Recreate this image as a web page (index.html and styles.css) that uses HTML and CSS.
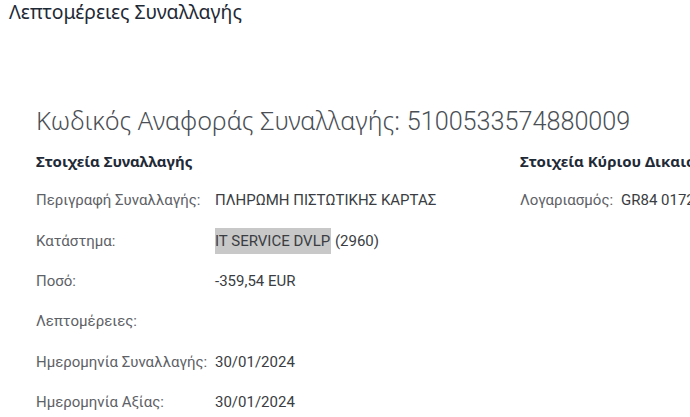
FILE: index.html
```html
<!DOCTYPE html>
<html lang="el">
<head>
  <meta charset="UTF-8">
  <title>Λεπτομέρειες Συναλλαγής</title>
  <link rel="stylesheet" href="styles.css">
</head>
<body>

  <h1 class="page-title">Λεπτομέρειες Συναλλαγής</h1>

  <div class="details">
    <h2 class="ref-title">Κωδικός Αναφοράς Συναλλαγής: <span class="ref-num">5100533574880009</span></h2>

    <div class="columns">
      <div class="col col-left">
        <h3 class="section-title">Στοιχεία Συναλλαγής</h3>
        <div class="row"><span class="label">Περιγραφή Συναλλαγής:</span><span class="value">ΠΛΗΡΩΜΗ ΠΙΣΤΩΤΙΚΗΣ ΚΑΡΤΑΣ</span></div>
        <div class="row"><span class="label">Κατάστημα:</span><span class="value"><mark>IT SERVICE DVLP</mark> (2960)</span></div>
        <div class="row"><span class="label">Ποσό:</span><span class="value">-359,54 EUR</span></div>
        <div class="row"><span class="label">Λεπτομέρειες:</span><span class="value"></span></div>
        <div class="row"><span class="label">Ημερομηνία Συναλλαγής:</span><span class="value">30/01/2024</span></div>
        <div class="row"><span class="label">Ημερομηνία Αξίας:</span><span class="value">30/01/2024</span></div>
      </div>

      <div class="col col-right">
        <h3 class="section-title">Στοιχεία Κύριου Δικαιούχου</h3>
        <div class="row row-account"><span class="label">Λογαριασμός:</span><span class="value">GR84 0172 0000 0050 0000 0000</span></div>
      </div>
    </div>
  </div>

</body>
</html>
```

FILE: styles.css
```css
html, body {
  margin: 0;
  overflow: hidden;
  background: #ffffff;
}

body {
  width: 690px;
  height: 417px;
  font-family: 'Roboto', 'Liberation Sans', sans-serif;
}

.page-title {
  margin: 0;
  padding: 0 0 0 9px;
  font-family: 'Noto Sans', sans-serif;
  font-size: 19.4px;
  font-weight: 400;
  line-height: 24px;
  color: #1f2a37;
}

.details {
  padding: 80px 0 0 36px;
  white-space: nowrap;
}

.ref-title {
  margin: 0;
  font-family: 'Noto Sans', sans-serif;
  font-size: 25.2px;
  font-weight: 300;
  line-height: 32px;
  color: #4a4f55;
}

.ref-num {
  font-family: 'Roboto', sans-serif;
  font-weight: 300;
}

.columns {
  display: flex;
  margin-top: 11px;
}

.col-left {
  width: 484px;
  flex-shrink: 0;
}

.col-right {
  flex-shrink: 0;
}

.section-title {
  margin: 0 0 7px;
  font-family: 'Noto Sans', sans-serif;
  font-size: 15px;
  font-weight: 700;
  line-height: 24px;
  color: #1f2a37;
}

.row {
  display: flex;
  align-items: center;
  height: 40.4px;
  font-size: 15px;
}

.label {
  width: 179px;
  flex-shrink: 0;
  color: #5e6166;
}

.row-account .label {
  width: 101px;
}

.value {
  color: #3a3d42;
}

mark {
  background: #c8c8c8;
  color: #3a3d42;
  padding: 4px 1px 4px 0;
}
```
